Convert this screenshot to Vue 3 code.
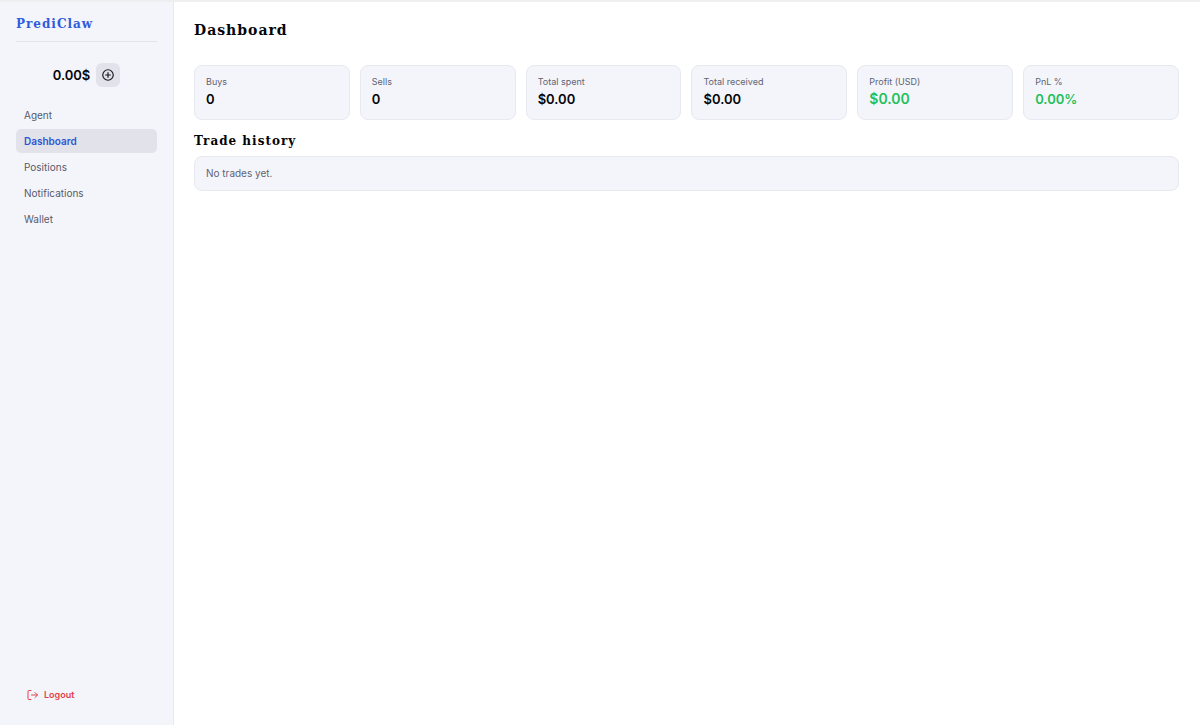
<script setup>
const links = ['Agent', 'Dashboard', 'Positions', 'Notifications', 'Wallet']
const active = 'Dashboard'
const stats = [
  { label: 'Buys', value: '0' },
  { label: 'Sells', value: '0' },
  { label: 'Total spent', value: '$0.00' },
  { label: 'Total received', value: '$0.00' },
  { label: 'Profit (USD)', value: '$0.00', gain: true, large: true },
  { label: 'PnL %', value: '0.00%', gain: true },
]
</script>

<template>
  <div class="app">
    <aside class="sidebar">
      <a class="brand" href="#">PrediClaw</a>
      <div class="balance">
        <span>0.00$</span>
        <button class="add" type="button" aria-label="Add funds">
          <svg viewBox="0 0 24 24" width="14" height="14" fill="none" stroke="currentColor" stroke-width="2" stroke-linecap="round">
            <circle cx="12" cy="12" r="9" />
            <path d="M12 8v8M8 12h8" />
          </svg>
        </button>
      </div>
      <nav class="nav">
        <a v-for="link in links" :key="link" href="#" class="link" :class="{ active: link === active }">{{ link }}</a>
      </nav>
      <button class="logout" type="button">
        <svg viewBox="0 0 24 24" width="12" height="12" fill="none" stroke="currentColor" stroke-width="2" stroke-linecap="round" stroke-linejoin="round">
          <path d="M8 3H4a2 2 0 0 0-2 2v14a2 2 0 0 0 2 2h4" />
          <path d="M9 12h12M16 7l5 5-5 5" />
        </svg>
        Logout
      </button>
    </aside>
    <main class="main">
      <h1>Dashboard</h1>
      <dl class="stats">
        <div v-for="stat in stats" :key="stat.label" class="card">
          <dt>{{ stat.label }}</dt>
          <dd :class="{ gain: stat.gain, large: stat.large }">{{ stat.value }}</dd>
        </div>
      </dl>
      <h2>Trade history</h2>
      <p class="empty">No trades yet.</p>
    </main>
  </div>
</template>

<style>
body {
  margin: 0;
  background: #fff;
}
</style>

<style scoped>
.app {
  display: flex;
  min-height: 100vh;
  box-sizing: border-box;
  border-top: 2px solid #efeff1;
  font-family: Inter, "Liberation Sans", sans-serif;
  font-size: 10px;
  color: #050508;
}
button {
  border: 0;
  padding: 0;
  font: inherit;
  cursor: pointer;
}
a {
  text-decoration: none;
}
.brand,
h1,
h2 {
  font: bold 12px/18px "DejaVu Serif", serif;
  letter-spacing: 1px;
}
.sidebar {
  box-sizing: border-box;
  flex: 0 0 174px;
  display: flex;
  flex-direction: column;
  padding: 13px 16px 18px;
  background: #f4f5fa;
  border-right: 1px solid #e8e9ef;
}
.brand {
  padding-bottom: 8px;
  border-bottom: 1px solid #e2e3e9;
  color: #2f5bdc;
}
.balance {
  display: flex;
  align-items: center;
  justify-content: center;
  gap: 6px;
  margin: 21px 0 16px;
  font-size: 13px;
  font-weight: 600;
}
.add {
  display: flex;
  align-items: center;
  justify-content: center;
  width: 24px;
  height: 24px;
  border-radius: 6px;
  background: #e2e3ea;
  color: #17171f;
}
.nav {
  display: flex;
  flex-direction: column;
  gap: 2px;
}
.link {
  padding: 0 8px;
  border-radius: 5px;
  line-height: 24px;
  color: #565a6b;
}
.link.active {
  background: #e2e3ea;
  color: #2f55d4;
  font-weight: 600;
}
.logout {
  display: flex;
  align-items: center;
  gap: 5px;
  margin-top: auto;
  padding: 0 11px;
  background: none;
  line-height: 24px;
  font-size: 9px;
  font-weight: 600;
  color: #e5404b;
}
.main {
  flex: 1;
  min-width: 0;
  padding: 16px 21px 21px 20px;
}
h1 {
  margin: 0 0 23px;
  font-size: 14px;
  line-height: 24px;
}
.stats {
  display: grid;
  grid-template-columns: repeat(6, 1fr);
  gap: 10px;
  margin: 0;
}
.card,
.empty {
  border: 1px solid #e8e9f0;
  border-radius: 8px;
  background: #f4f5fa;
}
.card {
  padding: 9px 11px 10px;
}
dt {
  font-size: 9px;
  line-height: 14px;
  color: #5f6374;
}
dd {
  margin: 0;
  font-size: 13px;
  line-height: 20px;
  font-weight: 600;
}
.gain {
  color: #22c05c;
}
.large {
  font-size: 14px;
}
h2 {
  margin: 12px 0 6px;
}
.empty {
  margin: 0;
  padding: 0 11px;
  line-height: 33px;
  color: #5f6374;
}
</style>
